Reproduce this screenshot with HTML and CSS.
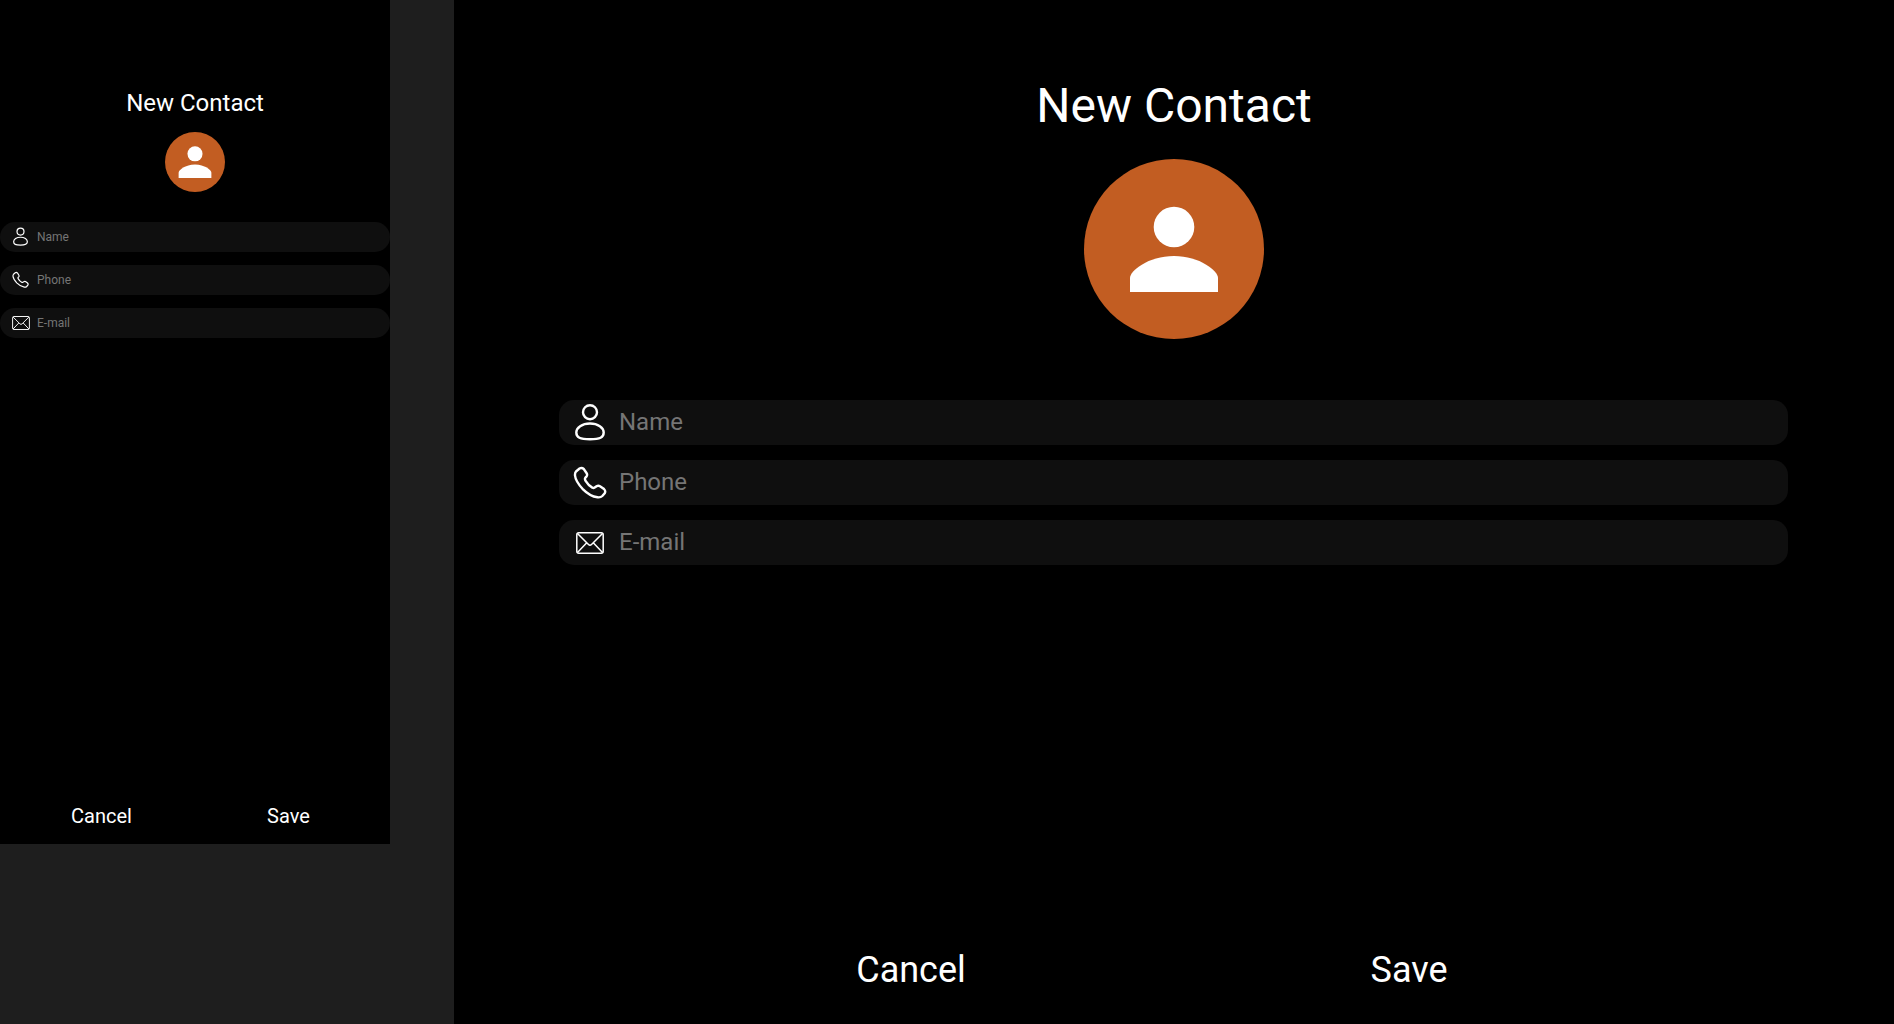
FILE: index.html
```html
<!DOCTYPE html>
<html lang="en">
<head>
<meta charset="utf-8">
<title>New Contact</title>
<link rel="stylesheet" href="styles.css">
</head>
<body>
<svg class="sprite" aria-hidden="true">
  <symbol id="person" viewBox="0 0 88 86">
    <circle cx="44" cy="21" r="20.300"/>
    <path d="M0 86V72C0 65 18 50 44 50S88 65 88 72V86Z"/>
  </symbol>
  <symbol id="user" viewBox="0 0 34 40">
    <circle cx="17" cy="9.200" r="7"/>
    <path d="M17 20.500C25 20.500 30.700 24.700 30.700 29.500C30.700 34.500 27 36.200 17 36.200C7 36.200 3.300 34.500 3.300 29.500C3.300 24.700 9 20.500 17 20.500Z"/>
  </symbol>
  <symbol id="phone" viewBox="0 0 34 40">
    <path d="M3 8.500L6.500 5.500Q8.800 4.200 10.800 6L13.500 10Q14.800 12 13.400 13.600L12.300 14.800Q11.500 16 12.600 17.800Q15.500 22.500 19.300 24.600Q21 25.400 22.200 24.200L23.500 23.300Q25.300 22.200 27 23.200L31 26Q33 28 31.700 30.300L29.300 33Q27.500 34.800 24.500 34.300Q17 33.300 9.500 25.800Q2.500 18 2 12.500Q1.800 10 3 8.500Z"/>
  </symbol>
  <symbol id="mail" viewBox="0 0 28 22">
    <rect x=".8" y=".8" width="26.400" height="20.400" rx="2"/>
    <path d="M1.500 1.500L12.500 12.500Q14 14 15.500 12.500L26.500 1.500M1.500 20.500L10.500 11M26.500 20.500L17.500 11"/>
  </symbol>
</svg>

<main class="board">
  <form class="screen phone">
    <h1 class="title">New Contact</h1>
    <div class="avatar"><svg class="person" aria-hidden="true"><use href="#person"/></svg></div>
    <div class="fields">
      <label class="field"><span class="cell"><svg class="icon" aria-hidden="true"><use href="#user"/></svg></span><input type="text" placeholder="Name" aria-label="Name"></label>
      <label class="field"><span class="cell"><svg class="icon" aria-hidden="true"><use href="#phone"/></svg></span><input type="tel" placeholder="Phone" aria-label="Phone"></label>
      <label class="field"><span class="cell"><svg class="icon mail" aria-hidden="true"><use href="#mail"/></svg></span><input type="email" placeholder="E-mail" aria-label="E-mail"></label>
    </div>
    <div class="actions"><button type="button">Cancel</button><button type="button">Save</button></div>
  </form>

  <form class="screen tablet">
    <h1 class="title">New Contact</h1>
    <div class="avatar"><svg class="person" aria-hidden="true"><use href="#person"/></svg></div>
    <div class="fields">
      <label class="field"><span class="cell"><svg class="icon" aria-hidden="true"><use href="#user"/></svg></span><input type="text" placeholder="Name" aria-label="Name"></label>
      <label class="field"><span class="cell"><svg class="icon" aria-hidden="true"><use href="#phone"/></svg></span><input type="tel" placeholder="Phone" aria-label="Phone"></label>
      <label class="field"><span class="cell"><svg class="icon mail" aria-hidden="true"><use href="#mail"/></svg></span><input type="email" placeholder="E-mail" aria-label="E-mail"></label>
    </div>
    <div class="actions"><button type="button">Cancel</button><button type="button">Save</button></div>
  </form>
</main>
</body>
</html>
```
FILE: styles.css
```css
* {
  box-sizing: border-box;
}

body {
  margin: 0;
  background: #1e1e1e;
  color: #fff;
  font-family: Roboto, sans-serif;
}

.sprite {
  display: none;
}

.board {
  display: flex;
  align-items: flex-start;
  gap: 64px;
  min-height: 100vh;
}

.screen {
  display: flex;
  flex-direction: column;
  background: #000;
}

.title {
  margin: 0;
  font-weight: 400;
  text-align: center;
}

.avatar {
  display: flex;
  align-items: center;
  justify-content: center;
  align-self: center;
  border-radius: 50%;
  background: #c25d22;
}

.person {
  fill: #fff;
}

.fields {
  display: flex;
  flex-direction: column;
}

.field {
  display: flex;
  align-items: center;
  border-radius: 15px;
  background: #0f0f0f;
}

.cell {
  display: flex;
  flex: none;
}

.icon {
  fill: none;
  stroke: #fff;
  stroke-width: 2.4;
}

.mail {
  stroke-width: 1.5;
}

.field input {
  flex: 1;
  min-width: 0;
  padding: 0;
  border: 0;
  outline: 0;
  background: none;
  color: #fff;
  font: inherit;
}

.field input::placeholder {
  color: #757575;
}

.actions {
  display: grid;
  grid-template-columns: 1fr 1fr;
  justify-items: center;
  margin-top: auto;
}

.actions button {
  padding: 0;
  border: 0;
  background: none;
  color: inherit;
  font: inherit;
}

/* Phone */
.phone {
  flex: 0 0 390px;
  min-height: 844px;
  padding: 89px 0 16px;
}

.phone .title {
  font-size: 24px;
  line-height: 28px;
}

.phone .avatar {
  width: 60px;
  height: 60px;
  margin: 15px 0 30px;
}

.phone .person {
  width: 34px;
  height: 32px;
}

.phone .fields {
  gap: 13px;
  font-size: 12px;
}

.phone .field {
  height: 30px;
  padding: 0 12px;
  gap: 7px;
}

.phone .cell {
  width: 18px;
}

.phone .icon {
  width: 17px;
  height: 20px;
}

.phone .mail {
  width: 18px;
  height: 14px;
}

.phone .actions {
  padding: 0 8px;
  font-size: 20px;
  line-height: 24px;
}

/* Tablet */
.tablet {
  flex: 1;
  min-width: 0;
  min-height: 100vh;
  padding: 78px 0 33px;
}

.tablet .title {
  font-size: 48px;
  line-height: 56px;
}

.tablet .avatar {
  width: 180px;
  height: 180px;
  margin: 25px 0 61px;
}

.tablet .person {
  width: 88px;
  height: 86px;
}

.tablet .fields {
  gap: 15px;
  padding: 0 106px 0 105px;
  font-size: 24px;
}

.tablet .field {
  height: 45px;
  padding: 0 14px;
  gap: 12px;
}

.tablet .field input {
  padding-bottom: 2px;
}

.tablet .cell {
  justify-content: center;
  width: 34px;
}

.tablet .icon {
  width: 34px;
  height: 40px;
}

.tablet .mail {
  width: 28px;
  height: 22px;
}

.tablet .actions {
  padding: 0 236px 0 208px;
  font-size: 36px;
  line-height: 42px;
}
```
